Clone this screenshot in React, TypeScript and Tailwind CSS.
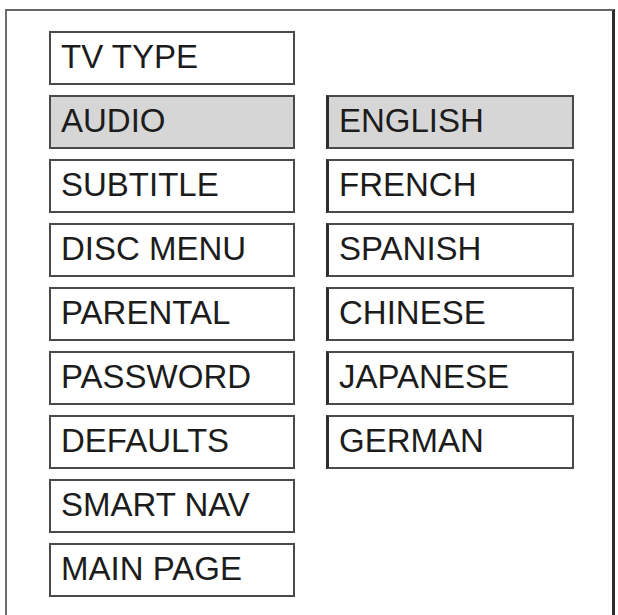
import clsx from "clsx";

const setupItems = [
  "TV TYPE",
  "AUDIO",
  "SUBTITLE",
  "DISC MENU",
  "PARENTAL",
  "PASSWORD",
  "DEFAULTS",
  "SMART NAV",
  "MAIN PAGE",
];

const languages = ["ENGLISH", "FRENCH", "SPANISH", "CHINESE", "JAPANESE", "GERMAN"];

type MenuBoxProps = {
  label: string;
  active?: boolean;
  submenu?: boolean;
};

const MenuBox = ({ label, active, submenu }: MenuBoxProps) => (
  <div
    className={clsx(
      "flex h-[54px] items-center border-2 border-[#4a4a4a] pb-[3px] text-[33px] leading-none text-[#1c1c1c]",
      submenu ? "w-[248px] border-l-[3px] border-l-[#2e2e2e] pl-[10px]" : "w-[246px] pl-[10px]",
      active ? "bg-[#d6d6d6]" : "bg-white",
    )}
  >
    {label}
  </div>
);

export default function App() {
  return (
    <div className="h-[615px] w-[618px] bg-white pl-[5px] pr-[3px] pt-[9px] font-['Liberation_Sans',Arial,sans-serif]">
      <div className="flex h-full gap-[31px] border-l-2 border-r-[3px] border-t-2 border-l-[#6e6e6e] border-r-[#2e2e2e] border-t-[#666666] pl-[42px] pt-[20px]">
        <div className="flex flex-col gap-[10px]">
          {setupItems.map((item) => (
            <MenuBox key={item} label={item} active={item === "AUDIO"} />
          ))}
        </div>
        <div className="mt-[64px] flex flex-col gap-[10px]">
          {languages.map((lang) => (
            <MenuBox key={lang} label={lang} active={lang === "ENGLISH"} submenu />
          ))}
        </div>
      </div>
    </div>
  );
}
